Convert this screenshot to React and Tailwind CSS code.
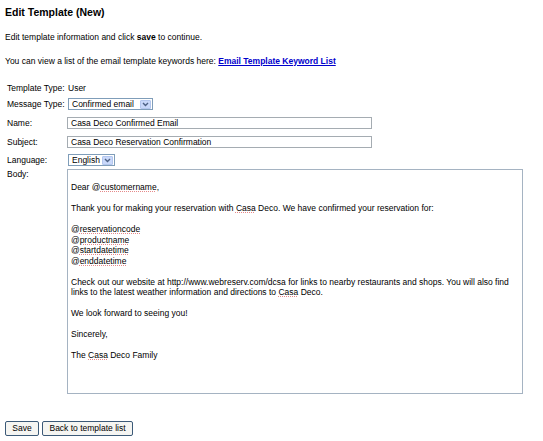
import React from 'react';

const Arrow = () => (
  <span className="ml-auto mr-[1px] flex h-[9px] w-[11px] items-center justify-center rounded-[1px] border border-[#b3c6ee] bg-[#c9d8fa]">
    <svg width="7" height="5" viewBox="0 0 7 5">
      <path d="M1 1 L3.5 3.5 L6 1" fill="none" stroke="#4d6185" strokeWidth="1.4" />
    </svg>
  </span>
);

const Select = ({ value, width }) => (
  <div className={`flex h-[12px] items-center border border-[#7f9db9] bg-white pl-[3px] ${width}`}>
    <span className="leading-[10px]">{value}</span>
    <Arrow />
  </div>
);

const Input = ({ value }) => (
  <div className="flex h-[12px] w-[305px] items-center border border-[#a5acb2] bg-white pl-[3px]">
    <span className="leading-[10px]">{value}</span>
  </div>
);

// spell-check underline, thin red line like the browser's
const Spell = ({ children }) => (
  <span className="underline decoration-[#e58a8a] decoration-dotted decoration-[1px] underline-offset-[1px]">{children}</span>
);

const Row = ({ label, children, className = '' }) => (
  <div className={`flex h-[12px] items-center ${className}`}>
    <div className="w-[62px] pl-[2px] leading-[10px]">{label}</div>
    {children}
  </div>
);

const App = () => {
  return (
    <div className="min-h-[441px] bg-white pl-[5px] font-['Liberation_Sans',Arial,sans-serif] text-[8.5px] text-black">
      <h1 className="pt-[6px] text-[10.5px] font-bold leading-[13px]">Edit Template (New)</h1>
      <p className="mt-[13px] leading-[10.5px]">
        Edit template information and click <b>save</b> to continue.
      </p>
      <p className="mt-[13px] leading-[10.5px]">
        You can view a list of the email template keywords here:{' '}
        <a href="#" className="font-bold text-[#0000cc] underline">Email Template Keyword List</a>
      </p>

      <Row label="Template Type:" className="mt-[16px]">
        <span className="pl-[1px] leading-[10px]">User</span>
      </Row>
      <Row label="Message Type:" className="mt-[4px]">
        <div className="pl-[1px]">
          <Select value="Confirmed email" width="w-[85px]" />
        </div>
      </Row>
      <Row label="Name:" className="mt-[7px]">
        <Input value="Casa Deco Confirmed Email" />
      </Row>
      <Row label="Subject:" className="mt-[7px]">
        <Input value="Casa Deco Reservation Confirmation" />
      </Row>
      <Row label="Language:" className="mt-[6px]">
        <div className="pl-[1px]">
          <Select value="English" width="w-[47px]" />
        </div>
      </Row>

      <div className="mt-[3px] flex">
        <div className="w-[62px] pl-[2px] pt-[1px] leading-[8px]">Body:</div>
        <div className="h-[225px] w-[456px] border border-[#a5b3c2] bg-white px-[3px] pt-[12px] leading-[10.5px]">
          <p>Dear @<Spell>customername</Spell>,</p>
          <p className="mt-[10.5px]">
            Thank you for making your reservation with <Spell>Casa</Spell> Deco. We have confirmed your reservation for:
          </p>
          <div className="mt-[10.5px]">
            <p>@<Spell>reservationcode</Spell></p>
            <p>@<Spell>productname</Spell></p>
            <p>@<Spell>startdatetime</Spell></p>
            <p>@<Spell>enddatetime</Spell></p>
          </div>
          <div className="mt-[10.5px]">
            <p className="whitespace-nowrap">
              Check out our website at http://www.webreserv.com/dcsa for links to nearby restaurants and shops. You will also find
            </p>
            <p>
              links to the latest weather information and directions to <Spell>Casa</Spell> Deco.
            </p>
          </div>
          <p className="mt-[10.5px]">We look forward to seeing you!</p>
          <p className="mt-[10.5px]">Sincerely,</p>
          <p className="mt-[10.5px]">The <Spell>Casa</Spell> Deco Family</p>
        </div>
      </div>

      <div className="mt-[27px] flex gap-[3px]">
        <button className="h-[15px] w-[34px] rounded-[2px] border border-[#3c5a78] bg-[#f5f5f2] text-[8.5px] leading-[13px]">
          Save
        </button>
        <button className="h-[15px] w-[91px] rounded-[2px] border border-[#3c5a78] bg-[#f5f5f2] text-[8.5px] leading-[13px]">
          Back to template list
        </button>
      </div>
    </div>
  );
};

export default App;
